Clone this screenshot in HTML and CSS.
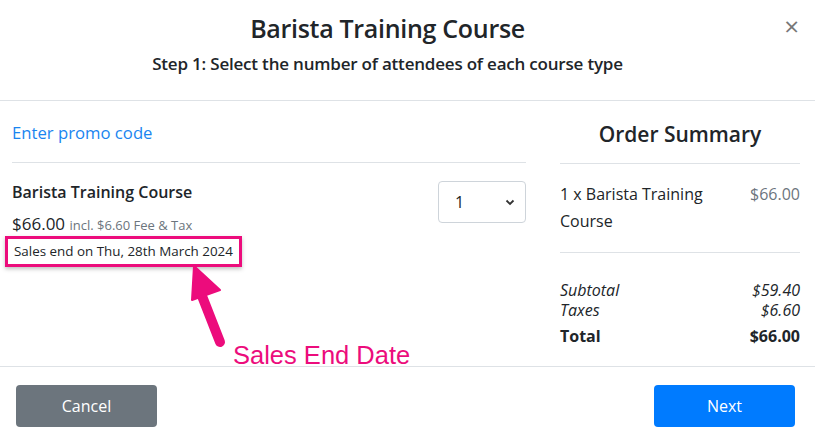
FILE: index.html
```html
<!DOCTYPE html>
<html lang="en">
  <head>
    <meta charset="UTF-8">
    <title>Barista Training Course</title>
    <link rel="stylesheet" href="styles.css">
  </head>
  <body>
    <div class="modal">
      <header class="modal-header">
        <h1>Barista Training Course</h1>
        <h2>Step 1: Select the number of attendees of each course type</h2>
        <button class="close" title="Close">&times;</button>
      </header>

      <main class="modal-body">
        <section class="tickets">
          <a class="promo" href="#">Enter promo code</a>
          <div class="ticket">
            <div class="ticket-info">
              <div class="ticket-name">Barista Training Course</div>
              <div class="ticket-price">$66.00 <small>incl. $6.60 Fee &amp; Tax</small></div>
              <div class="sales-end">Sales end on Thu, 28th March 2024</div>
            </div>
            <div class="qty">
              <span>1</span>
              <svg width="10" height="7" viewBox="0 0 10 7"><path d="M1.5 1.5 5 5l3.5-3.5" fill="none" stroke="#333" stroke-width="1.8"/></svg>
            </div>
          </div>

          <!-- Annotation -->
          <svg class="callout-arrow" width="60" height="90" viewBox="0 0 60 90">
            <path d="M48 82 L30 36" stroke="#ec0c7c" stroke-width="10" stroke-linecap="round"/>
            <path d="M22 6 L48 30 L20 40 Z" fill="#ec0c7c" stroke="#ec0c7c" stroke-width="2" stroke-linejoin="round"/>
          </svg>
          <span class="callout-label">Sales End Date</span>
        </section>

        <aside class="summary">
          <h3>Order Summary</h3>
          <div class="summary-item">
            <span>1 x Barista Training Course</span>
            <span class="muted">$66.00</span>
          </div>
          <div class="totals">
            <div class="row sub"><span>Subtotal</span><span>$59.40</span></div>
            <div class="row sub"><span>Taxes</span><span>$6.60</span></div>
            <div class="row total"><span>Total</span><span>$66.00</span></div>
          </div>
        </aside>
      </main>

      <footer class="modal-footer">
        <button class="btn btn-grey">Cancel</button>
        <button class="btn btn-blue">Next</button>
      </footer>
    </div>
  </body>
</html>
```

FILE: styles.css
```css
* {
  box-sizing: border-box;
}
html, body {
  margin: 0;
}
body {
  background: white;
  color: #212529;
  font-family: 'Open Sans', sans-serif;
  font-size: 16px;
}
.modal {
  width: 815px;
  height: 441px;
  display: flex;
  flex-direction: column;
}

/* Header */
.modal-header {
  position: relative;
  height: 101px;
  border-bottom: 1px solid #dee2e6;
  text-align: center;
  padding: 12px 40px 0 0;
}
.modal-header h1 {
  margin: 0;
  font-size: 25px;
  font-weight: 600;
  line-height: 32px;
  letter-spacing: -0.3px;
}
.modal-header h2 {
  margin: 9px 0 0;
  font-size: 17px;
  font-weight: 600;
  line-height: 22px;
  letter-spacing: -0.2px;
}
.close {
  position: absolute;
  top: 12px;
  right: 16px;
  border: 0;
  background: none;
  color: #777;
  font-size: 26px;
  line-height: 28px;
  padding: 0;
  font-family: 'Open Sans', sans-serif;
}

/* Body */
.modal-body {
  flex-grow: 1;
  display: flex;
  gap: 34px;
  padding: 0 15px 0 12px;
  border-bottom: 1px solid #dee2e6;
}
.tickets {
  position: relative;
  width: 514px;
}
.promo {
  display: block;
  padding: 20px 0 17px;
  border-bottom: 1px solid #dee2e6;
  color: #1a85f0;
  text-decoration: none;
  font-size: 16.7px;
  line-height: 24px;
}
.ticket {
  display: flex;
  justify-content: space-between;
  padding-top: 18px;
}
.ticket-name {
  font-size: 16px;
  font-weight: 600;
  line-height: 22px;
}
.ticket-price {
  margin-top: 10px;
  font-size: 17px;
  line-height: 22px;
}
.ticket-price small {
  font-size: 13px;
  color: #6c757d;
}
.sales-end {
  margin: 0 0 0 -7px;
  padding: 3px 6px;
  width: max-content;
  border: 3px solid #ec0c7c;
  box-shadow: 0 2px 4px rgba(0, 0, 0, 0.25);
  font-size: 13.4px;
  line-height: 19px;
  white-space: nowrap;
}
.qty {
  width: 88px;
  height: 42px;
  border: 1px solid #ced4da;
  border-radius: 4px;
  display: flex;
  align-items: center;
  justify-content: space-between;
  padding: 0 10px 0 16px;
  font-size: 16px;
}
.callout-arrow {
  position: absolute;
  left: 160px;
  top: 159px;
}
.callout-label {
  position: absolute;
  left: 221px;
  top: 239px;
  color: #ec0c7c;
  font-family: 'Liberation Sans', Arial, sans-serif;
  font-size: 25.5px;
  line-height: 30px;
}

/* Summary */
.summary {
  width: 240px;
}
.summary h3 {
  margin: 0;
  padding: 17px 0 13px;
  text-align: center;
  font-size: 21px;
  font-weight: 600;
  line-height: 32px;
  border-bottom: 1px solid #dee2e6;
}
.summary-item {
  display: flex;
  justify-content: space-between;
  gap: 20px;
  padding: 17px 0 17px;
  border-bottom: 1px solid #dee2e6;
  font-size: 16px;
  line-height: 27px;
}
.muted {
  color: #6c757d;
}
.totals {
  padding-top: 27px;
  font-size: 16px;
}
.row {
  display: flex;
  justify-content: space-between;
  line-height: 20px;
}
.sub {
  font-style: italic;
}
.total {
  margin-top: 6px;
  font-weight: 700;
}

/* Footer */
.modal-footer {
  height: 74px;
  display: flex;
  justify-content: space-between;
  padding: 18px 20px 0 16px;
}
.btn {
  width: 141px;
  height: 42px;
  border: 0;
  border-radius: 4px;
  color: white;
  font-family: 'Open Sans', sans-serif;
  font-size: 16px;
}
.btn-grey {
  background: #6c757d;
}
.btn-blue {
  background: #007bff;
}
```
